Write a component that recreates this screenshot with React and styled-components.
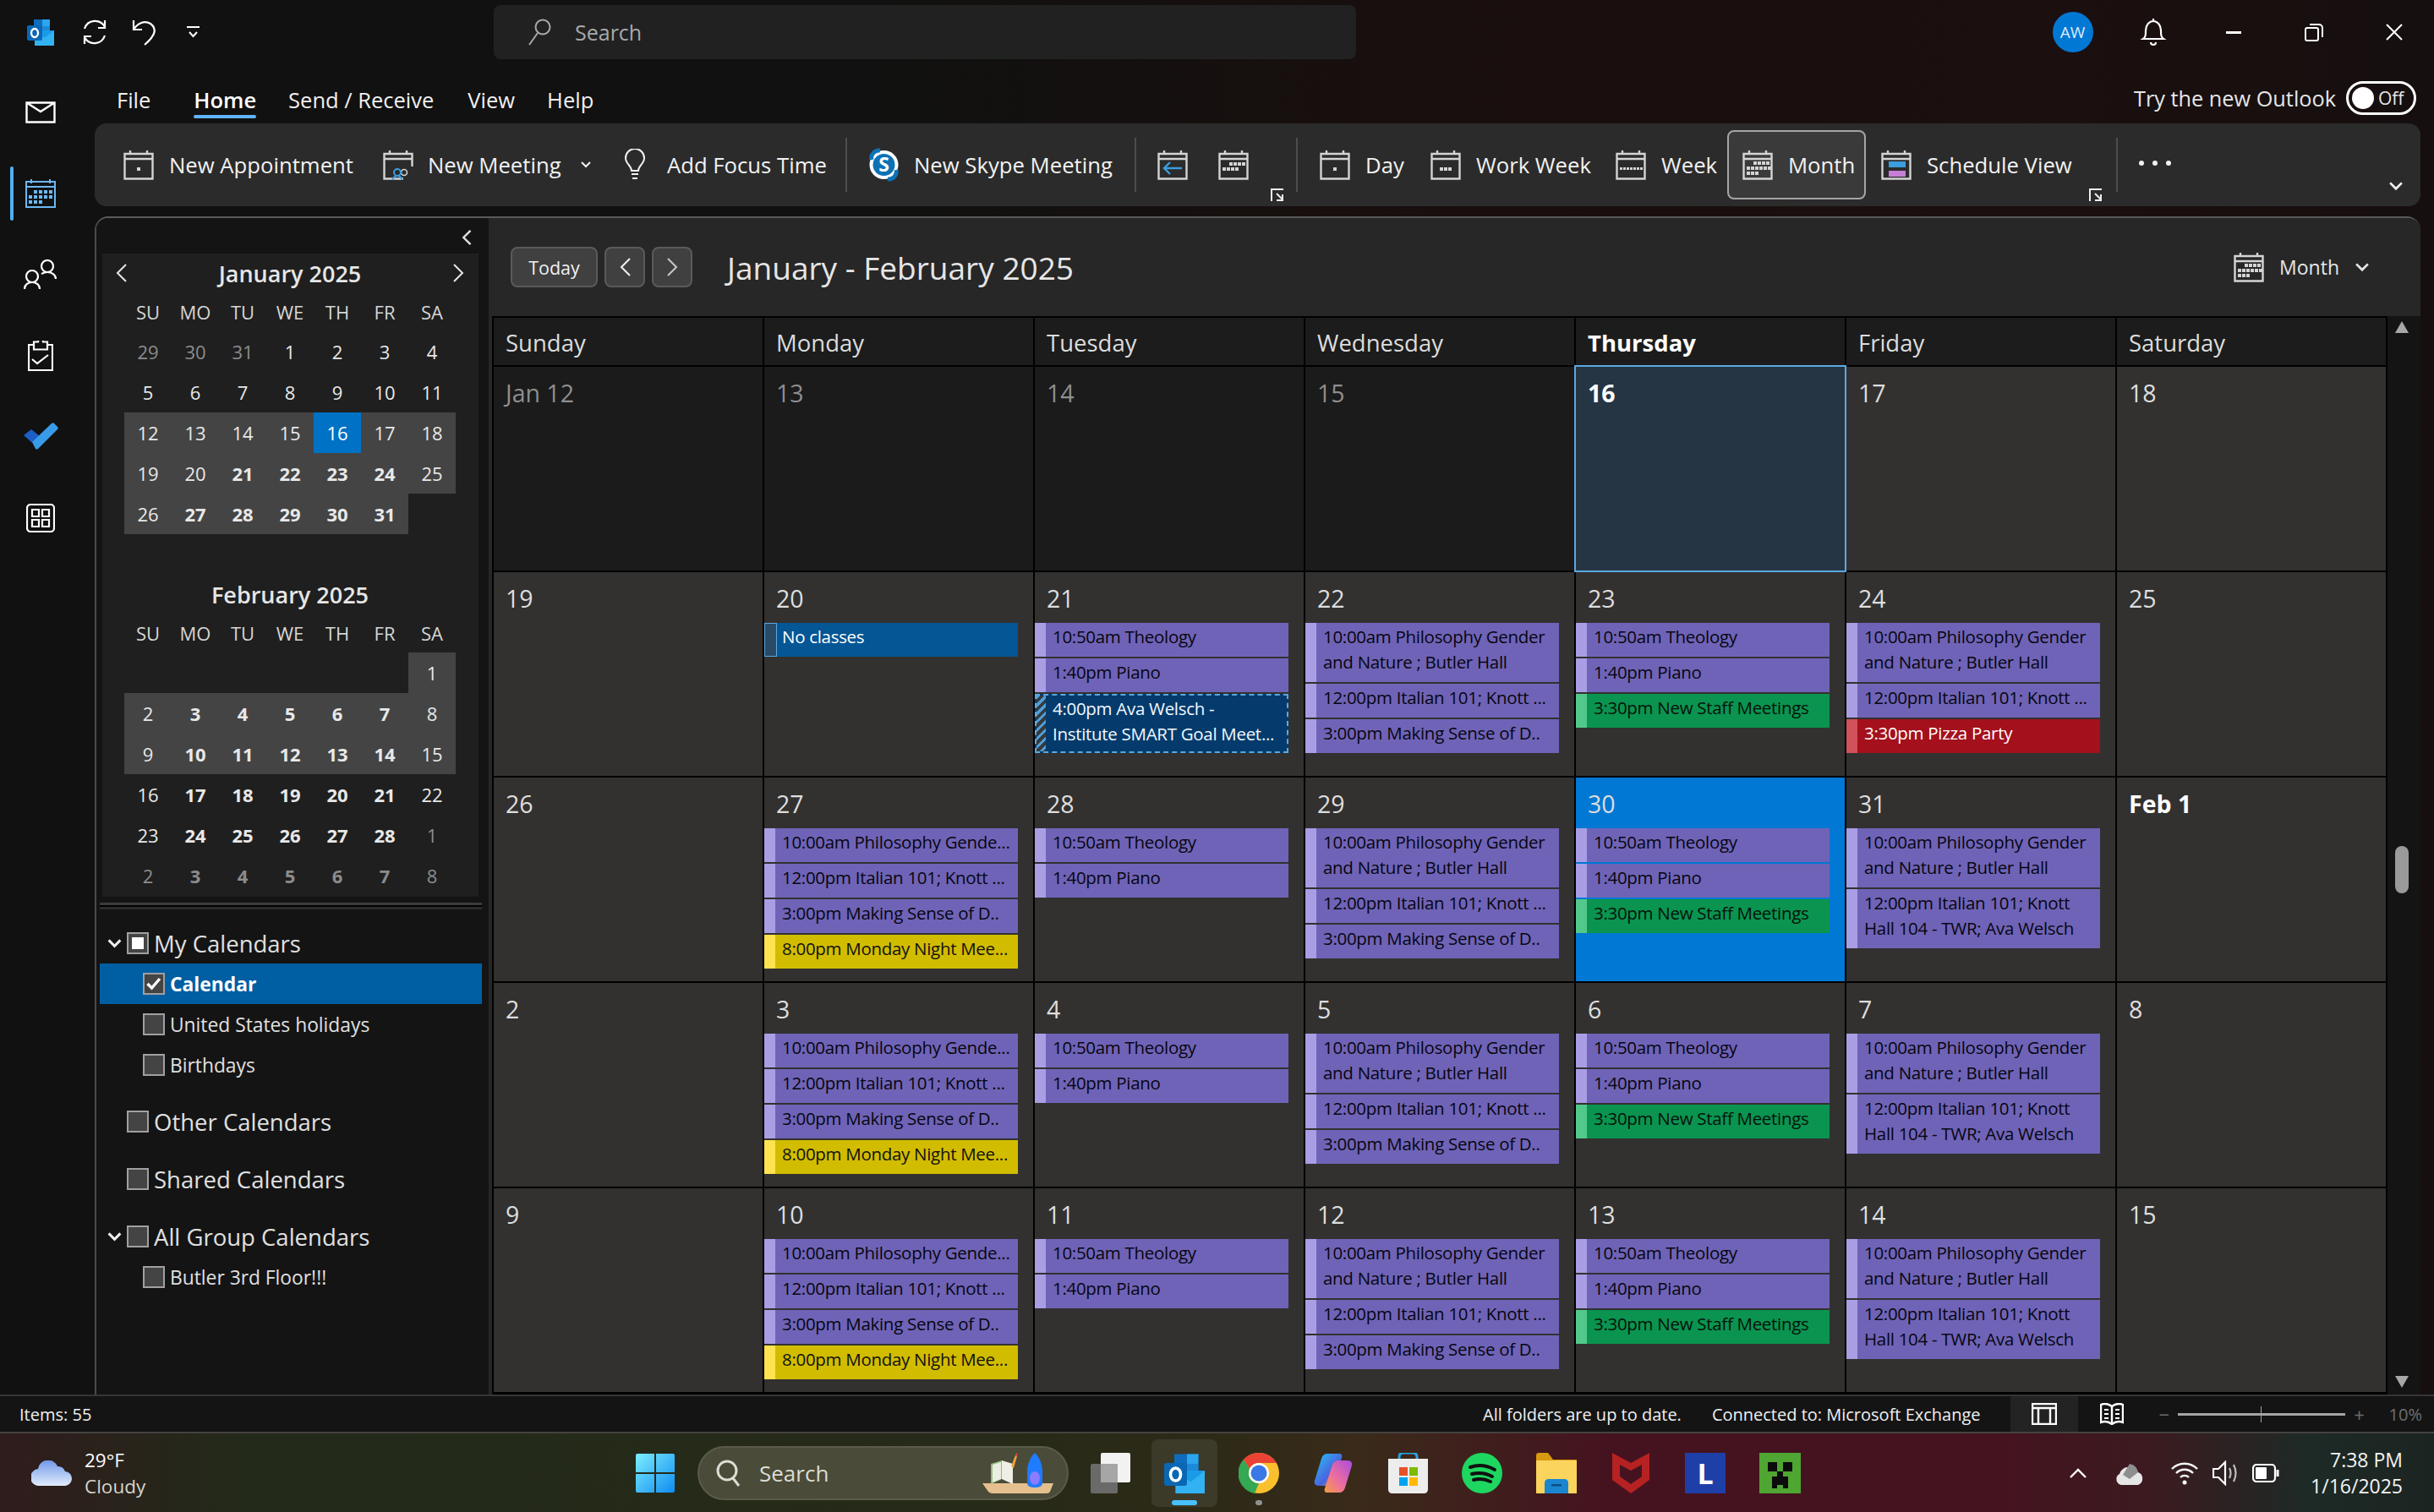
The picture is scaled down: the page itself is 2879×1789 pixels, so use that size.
import React from "react";
import styled, { createGlobalStyle } from "styled-components";

const FONT = `"Open Sans", "Noto Sans", sans-serif`;

const GlobalStyle = createGlobalStyle`
  html, body { margin: 0; padding: 0; background: #0f0f0f; }
  * { box-sizing: border-box; }
`;

const Shell = styled.div`
  width: 2879px;
  height: 1789px;
  overflow: hidden;
  display: flex;
  flex-direction: column;
  font-family: ${FONT};
  color: #e6e6e6;
  background: linear-gradient(90deg, #101110 0%, #101110 35%, #190f0e 60%, #1b0f0f 85%, #160f0f 100%);
`;

/* title bar */
const TitleBar = styled.div`
  height: 76px;
  flex: none;
  display: flex;
  align-items: center;
`;
const QuickAccess = styled.div`
  width: 584px;
  flex: none;
  display: flex;
  align-items: center;
  padding-left: 32px;
  color: #fff;
`;
const QuickIcon = styled.span`
  display: inline-flex;
  margin-left: ${(p) => p.$ml}px;
`;
const TopSearch = styled.div`
  width: 1020px;
  height: 64px;
  background: #212121;
  border-radius: 8px;
  display: flex;
  align-items: center;
  padding-left: 40px;
  gap: 28px;
  color: #a9a9a9;
  font-size: 25px;
`;
const WindowControls = styled.div`
  margin-left: auto;
  display: flex;
  align-items: center;
`;
const WindowSlot = styled.div`
  width: 95px;
  display: flex;
  justify-content: center;
  color: #fff;
`;
const Avatar = styled.div`
  width: 48px;
  height: 48px;
  border-radius: 50%;
  background: #0078d4;
  display: flex;
  align-items: center;
  justify-content: center;
  font-size: 19px;
  color: #dcecff;
`;

/* body */
const Body = styled.div`
  flex: 1;
  min-height: 0;
  display: flex;
`;
const Rail = styled.nav`
  width: 112px;
  flex: none;
  padding-top: 9px;
`;
const RailButton = styled.div`
  height: 96px;
  display: flex;
  align-items: center;
  justify-content: center;
  position: relative;
  padding-right: 16px;
  color: ${(p) => (p.$active ? "#6cb8f6" : "#fff")};
  &::before {
    content: "";
    display: ${(p) => (p.$active ? "block" : "none")};
    position: absolute;
    left: 12px;
    top: 16px;
    bottom: 16px;
    width: 4px;
    border-radius: 2px;
    background: #4fb0f5;
  }
`;
const Workspace = styled.div`
  flex: 1;
  min-width: 0;
  display: flex;
  flex-direction: column;
  padding-right: 16px;
`;

/* tabs */
const TabRow = styled.div`
  height: 70px;
  flex: none;
  display: flex;
  align-items: flex-start;
  padding: 24px 0 0 26px;
`;
const Tab = styled.div`
  height: 36px;
  line-height: 36px;
  font-size: 25.5px;
  font-weight: ${(p) => (p.$active ? 600 : 400)};
  color: ${(p) => (p.$active ? "#fff" : "#f0f0f0")};
  margin-right: ${(p) => p.$mr}px;
  position: relative;
  &::after {
    content: "";
    display: ${(p) => (p.$active ? "block" : "none")};
    position: absolute;
    left: 0;
    right: 0;
    bottom: -4px;
    height: 4px;
    border-radius: 2px;
    background: #60b4ff;
  }
`;
const NewOutlook = styled.div`
  margin-left: auto;
  display: flex;
  align-items: center;
  gap: 12px;
  font-size: 25.3px;
  margin-top: -4px;
  margin-right: 5px;
  height: 40px;
`;
const Toggle = styled.div`
  width: 83px;
  height: 40px;
  border: 3px solid #fff;
  border-radius: 20px;
  display: flex;
  align-items: center;
  padding-left: 4px;
  gap: 5px;
  font-size: 21px;
  &::before {
    content: "";
    width: 26px;
    height: 26px;
    border-radius: 50%;
    background: #fff;
  }
`;

/* ribbon */
const Ribbon = styled.div`
  height: 98px;
  flex: none;
  background: #2b2b2b;
  border-radius: 14px;
  display: flex;
  align-items: center;
  padding-left: 34px;
  font-size: 25.7px;
  color: #f2f2f2;
`;
const RibbonItem = styled.div`
  width: ${(p) => p.$w}px;
  flex: none;
  display: flex;
  align-items: center;
  gap: ${(p) => p.$gap ?? 18}px;
  white-space: nowrap;
`;
const RibbonActive = styled(RibbonItem)`
  height: 82px;
  padding-left: 16px;
  margin-right: 18px;
  background: #3a3a3a;
  border: 2px solid #a5a5a5;
  border-radius: 8px;
`;
const RibbonSep = styled.div`
  width: 2px;
  height: 64px;
  flex: none;
  background: #4d4d4d;
  margin: 0 ${(p) => p.$mr}px 0 0;
`;
const Launcher = styled.div`
  width: ${(p) => p.$w}px;
  flex: none;
  align-self: flex-end;
  height: 32px;
  color: #eee;
`;
const RibbonChevron = styled.div`
  margin-left: auto;
  margin-right: 20px;
  align-self: flex-end;
  margin-bottom: 18px;
  display: flex;
  color: #eee;
`;
const Dots = styled.div`
  margin-left: 25px;
  display: flex;
  gap: 10px;
  margin-top: -5px;
  & > i {
    width: 6px;
    height: 6px;
    border-radius: 50%;
    background: #f0f0f0;
  }
`;
const MeetCaret = styled.span`
  display: flex;
  margin-left: 6px;
`;

/* panel */
const Panel = styled.div`
  margin-top: 12px;
  flex: 1;
  min-height: 0;
  display: flex;
  border-radius: 16px 16px 0 0;
  border-top: 2px solid #5a5a5a;
  border-left: 2px solid #4a4a4a;
  overflow: hidden;
`;
const LeftPane = styled.aside`
  width: 464px;
  flex: none;
  background: #141414;
  padding-top: 14px;
`;
const Collapse = styled.div`
  height: 26px;
  display: flex;
  justify-content: flex-end;
  padding-right: 20px;
  color: #ddd;
`;
const MiniPanel = styled.div`
  width: 445px;
  margin: 2px 0 0 7px;
  background: #1f1f1f;
  padding: 0 0 0 26px;
  height: 761px;
`;
const MiniTitle = styled.div`
  height: 46px;
  width: 412px;
  margin-left: -10px;
  display: flex;
  align-items: center;
  justify-content: space-between;
  font-size: 27px;
  font-weight: 600;
  color: #e6e6e6;
`;
const MiniFebTitle = styled(MiniTitle)`
  justify-content: center;
  margin-left: 0;
  width: 392px;
`;
const MiniGrid = styled.div`
  display: grid;
  grid-template-columns: repeat(7, 56px);
  grid-auto-rows: 48px;
`;
const MiniHead = styled.div`
  display: grid;
  grid-template-columns: repeat(7, 56px);
  height: 46px;
  align-items: center;
  text-align: center;
  font-size: 22px;
  color: #d6d6d6;
`;
const MiniDay = styled.div`
  display: flex;
  align-items: center;
  justify-content: center;
  font-size: 22px;
  font-weight: ${(p) => (p.$bold ? 700 : 400)};
  color: ${(p) => (p.$dim ? "#8c8c8c" : p.$today ? "#fff" : "#e8e8e8")};
  background: ${(p) => (p.$today ? "#0072c6" : p.$shade ? "#444444" : "transparent")};
`;
const PaneRule = styled.div`
  height: 8px;
  margin: 7px 8px 0 4px;
  border-top: 3px solid #3c3c3c;
  border-bottom: 3px solid #2c2c2c;
  background: #000;
`;
const Tree = styled.div`
  padding: 16px 8px 0 4px;
`;
const TreeGroup = styled.div`
  height: 48px;
  margin-top: ${(p) => p.$mt || 0}px;
  display: flex;
  align-items: center;
  padding-left: 9px;
  gap: 6px;
  font-size: 27.5px;
  color: #e0e0e0;
`;
const TreeChevron = styled.span`
  width: 17px;
  display: flex;
  color: #eee;
`;
const TreeChild = styled.div`
  height: 48px;
  display: flex;
  align-items: center;
  padding-left: 51px;
  gap: 6px;
  font-size: 22.8px;
  font-weight: ${(p) => (p.$selected ? 700 : 400)};
  color: ${(p) => (p.$selected ? "#fff" : "#e0e0e0")};
  background: ${(p) => (p.$selected ? "#005ea2" : "transparent")};
`;
const CheckBox = styled.span`
  width: 26px;
  height: 26px;
  flex: none;
  background: #444;
  border: 2px solid #a0a0a0;
  display: flex;
  align-items: center;
  justify-content: center;
  color: #fff;
  &::before {
    content: "";
    display: ${(p) => (p.$mixed ? "block" : "none")};
    width: 14px;
    height: 14px;
    background: #fff;
  }
`;

/* calendar */
const RightPane = styled.main`
  flex: 1;
  min-width: 0;
  background: #272727;
  display: flex;
  flex-direction: column;
  padding-left: 4px;
`;
const CalBar = styled.div`
  height: 116px;
  flex: none;
  display: flex;
  align-items: center;
  padding: 0 60px 0 22px;
`;
const CalButton = styled.div`
  width: ${(p) => p.$w}px;
  height: 48px;
  margin-right: 8px;
  background: #404040;
  border: 2px solid #5a5a5a;
  border-radius: 8px;
  display: flex;
  align-items: center;
  justify-content: center;
  font-size: 21.5px;
  color: ${(p) => p.$tone || "#f0f0f0"};
`;
const CalTitle = styled.h1`
  margin: 0 0 0 33px;
  font-size: 37px;
  font-weight: 500;
  color: #e6e6e6;
  white-space: nowrap;
`;
const ViewPicker = styled.div`
  margin-left: auto;
  display: flex;
  align-items: center;
  gap: 18px;
  font-size: 23px;
  color: #e6e6e6;
`;
const GridWrap = styled.div`
  flex: 1;
  min-height: 0;
  display: flex;
`;
const MonthGrid = styled.div`
  width: 2242px;
  flex: none;
  background: #000;
  padding: 2px;
  display: grid;
  grid-template-columns: repeat(7, 318px);
  grid-template-rows: 56px repeat(5, 241px);
  gap: 2px;
`;
const DayHead = styled.div`
  background: #1c1c1c;
  display: flex;
  align-items: center;
  padding: 2px 0 0 14px;
  font-size: 27.5px;
  font-weight: ${(p) => (p.$today ? 700 : 400)};
  color: ${(p) => (p.$today ? "#fff" : "#dcdcdc")};
`;
const cellBg = { past: "#1b1b1b", today: "#253544", sel: "#0078d4", normal: "#323130" };
const DayCell = styled.div`
  background: ${(p) => cellBg[p.$kind || "normal"]};
  box-shadow: ${(p) => (p.$kind === "today" ? "0 0 0 2px #5aa8e0" : "none")};
  position: relative;
  min-width: 0;
`;
const DateLabel = styled.div`
  height: 60px;
  line-height: 62px;
  padding-left: 14px;
  font-size: 28.5px;
  font-weight: ${(p) => (p.$bold ? 700 : 400)};
  color: ${(p) => (p.$past ? "#8f8f8f" : p.$bold ? "#fff" : "#dedede")};
`;
const EventStack = styled.div`
  display: flex;
  flex-direction: column;
  gap: 2px;
  width: 300px;
`;
const tones = {
  purple: { bg: "#6f63b7", stripe: "#a99ee4", text: "#06060f" },
  green: { bg: "#0a9450", stripe: "#52c98a", text: "#04120a" },
  yellow: { bg: "#d2bc00", stripe: "#fde34f", text: "#111" },
  red: { bg: "#a4101c", stripe: "#d1515c", text: "#fff" },
  blue: { bg: "#055695", stripe: "#2a4a66", text: "#fff" },
};
const Event = styled.div`
  flex: none;
  padding: 1px 0 9px 21px;
  font-size: 20.5px;
  letter-spacing: -0.3px;
  line-height: 30px;
  white-space: pre;
  overflow: hidden;
  background: ${(p) => tones[p.$tone].bg};
  color: ${(p) => tones[p.$tone].text};
  position: relative;
  &::before {
    content: "";
    position: absolute;
    left: 0;
    top: 0;
    bottom: 0;
    width: 13px;
    background: ${(p) => tones[p.$tone].stripe};
    border: ${(p) => (p.$tone === "blue" ? "1px solid #5aa8e0" : "none")};
  }
`;
const TentativeEvent = styled.div`
  flex: none;
  height: 70px;
  padding: 0 0 0 19px;
  font-size: 20.5px;
  letter-spacing: -0.3px;
  line-height: 30px;
  white-space: pre;
  overflow: hidden;
  background: #043b6c;
  color: #f2f8ff;
  border: 2px dashed #5aa8e0;
  position: relative;
  &::before {
    content: "";
    position: absolute;
    left: 0;
    top: 0;
    bottom: 0;
    width: 11px;
    background: repeating-linear-gradient(135deg, #4d9fdc 0 3px, #3a3a3a 3px 7px);
  }
`;
const Scrollbar = styled.div`
  flex: 1;
  background: #141414;
  position: relative;
`;
const ScrollArrow = styled.div`
  position: absolute;
  left: 9px;
  ${(p) => (p.$down ? "bottom: 8px;" : "top: 6px;")}
  width: 0;
  height: 0;
  border-left: 8px solid transparent;
  border-right: 8px solid transparent;
  ${(p) => (p.$down ? "border-top: 14px solid #a8a8a8;" : "border-bottom: 14px solid #a8a8a8;")}
`;
const ScrollThumb = styled.div`
  position: absolute;
  left: 9px;
  top: 627px;
  width: 16px;
  height: 56px;
  border-radius: 8px;
  background: #9a9a9a;
`;

/* status bar */
const StatusBar = styled.div`
  height: 44px;
  flex: none;
  background: #141414;
  border-top: 2px solid #353535;
  display: flex;
  align-items: center;
  padding-left: 23px;
  font-size: 20px;
  color: #f0f0f0;
`;
const StatusRight = styled.div`
  margin-left: auto;
  display: flex;
  align-items: center;
  height: 100%;
  padding-right: 14px;
`;
const StatusText = styled.span`
  margin-right: ${(p) => p.$mr}px;
`;
const ViewTab = styled.div`
  width: 80px;
  height: 100%;
  display: flex;
  align-items: center;
  justify-content: center;
  background: ${(p) => (p.$on ? "#232323" : "transparent")};
  color: #fff;
  margin-right: ${(p) => p.$mr || 0}px;
`;
const Slider = styled.div`
  width: 246px;
  display: flex;
  align-items: center;
  gap: 10px;
  color: #6d6d6d;
  font-size: 22px;
`;
const SliderTrack = styled.div`
  width: 198px;
  height: 3px;
  background: #a5a5a5;
  position: relative;
  flex: none;
  &::after {
    content: "";
    position: absolute;
    left: 98px;
    top: -8px;
    width: 1px;
    height: 19px;
    background: #a5a5a5;
  }
`;
const ZoomPct = styled.span`
  color: #6f6f6f;
  margin-left: 26px;
`;

/* taskbar */
const Taskbar = styled.footer`
  height: 95px;
  flex: none;
  display: flex;
  align-items: center;
  border-top: 2px solid #45423f;
  background: linear-gradient(90deg, #2f1c1c 0%, #232a1a 10%, #262a18 40%, #2d2a17 50%, #3a2a1a 56%, #45131f 66%, #45131f 82%, #3c1a1f 88%, #1d2a26 95%, #1c2421 100%);
`;
const Weather = styled.div`
  width: 752px;
  flex: none;
  display: flex;
  align-items: center;
  gap: 14px;
  padding-left: 37px;
  font-size: 22.5px;
  line-height: 31px;
  color: #fff;
`;
const WeatherSub = styled.div`
  color: #d4d4d0;
`;
const SearchPill = styled.div`
  width: 439px;
  height: 64px;
  margin: 0 26px 0 27px;
  border-radius: 32px;
  background: #4a4b38;
  border: 2px solid #5a5b48;
  display: flex;
  align-items: center;
  padding: 0 10px 0 20px;
  gap: 21px;
  font-size: 26px;
  color: #dcdcd4;
`;
const PillArt = styled.span`
  margin-left: auto;
  display: flex;
`;
const TaskTiles = styled.div`
  margin-left: 25px;
  display: flex;
  gap: 10px;
`;
const TaskTile = styled.div`
  width: 78px;
  height: 80px;
  display: flex;
  align-items: center;
  justify-content: center;
  position: relative;
  border-radius: 8px;
  background: ${(p) => (p.$active ? "rgba(255, 255, 255, 0.08)" : "transparent")};
  &::after {
    content: "";
    display: ${(p) => (p.$mark ? "block" : "none")};
    position: absolute;
    bottom: 2px;
    left: 50%;
    transform: translateX(-50%);
    width: ${(p) => (p.$mark === "blue" ? 30 : 8)}px;
    height: 6px;
    border-radius: 3px;
    background: ${(p) => (p.$mark === "blue" ? "#47c0ff" : "#8f8f8f")};
  }
`;
const Tray = styled.div`
  margin-left: auto;
  display: flex;
  align-items: center;
  color: #fff;
  padding-right: 37px;
`;
const TrayIcon = styled.span`
  display: flex;
  margin-left: ${(p) => p.$ml}px;
`;
const Clock = styled.div`
  margin-left: 37px;
  text-align: right;
  font-size: 23px;
  line-height: 31px;
  color: #f4f4f4;
`;

/* icons */
const Svg = ({ w, h, vb, children, sw = 2, fill = "none", ...rest }) => (
  <svg width={w} height={h} viewBox={vb || `0 0 ${w} ${h}`} fill={fill} stroke={fill === "none" ? "currentColor" : "none"} strokeWidth={sw} {...rest}>
    {children}
  </svg>
);

const Cells = ({ rows, color = "#d8d8d8", s = 4 }) =>
  rows.flatMap(([y, xs]) => xs.map((x) => <rect key={`${x}-${y}`} x={x} y={y} width={s} height={s} fill={color} stroke="none" />));

const CalIcon = ({ kind, color = "#d4d4d4" }) => (
  <svg width="36" height="36" viewBox="0 0 36 36" fill="none" stroke={color} strokeWidth="2.4" style={{ flex: "none" }}>
    <path d="M1.5 5h33v29.5h-33zM1.5 11h33M8 1v5M28 1v5" />
    {kind === "dot" && <Cells rows={[[21, [16]]]} color={color} />}
    {kind === "work" && <Cells rows={[[21, [11, 16, 21]]]} color={color} />}
    {kind === "week" && <Cells rows={[[21, [5, 9, 13, 17, 21, 25, 29]]]} color={color} s={3} />}
    {kind === "next" && <Cells rows={[[15, [13, 18, 23, 28]], [21, [5, 10, 15, 20]]]} color={color} />}
    {kind === "month" && <Cells rows={[[14, [13, 18, 23, 28]], [20, [5, 10, 15, 20, 25, 30]], [26, [5, 10, 15]]]} color={color} />}
    {kind === "today" && (
      <path d="M29 22H8M15 15l-7 7 7 7" stroke="#3a9de0" strokeWidth="2.4" />
    )}
    {kind === "schedule" && (
      <>
        <rect x="9" y="14" width="20" height="7" fill="#3a9de0" stroke="none" />
        <rect x="9" y="25" width="20" height="7" fill="#c77fd6" stroke="none" />
      </>
    )}
    {kind === "meet" && (
      <>
        <rect x="24" y="20" width="14" height="16" fill="#2b2b2b" stroke="none" />
        <circle cx="25" cy="27" r="3.5" stroke="#d4d4d4" strokeWidth="1.6" />
        <circle cx="17" cy="27" r="4" stroke="#3a9de0" strokeWidth="2" />
        <path d="M11 37c1-4 3-6 6-6s5 2 6 6" stroke="#3a9de0" strokeWidth="2" />
      </>
    )}
  </svg>
);

const LauncherIcon = () => (
  <Svg w={16} h={16}>
    <path d="M15 1H1v14M7 6l7 7M14 7v7H7" />
  </Svg>
);
const SmallChevron = ({ w = 12, h = 8, sw = 2 }) => (
  <Svg w={w} h={h} vb="0 0 12 8" sw={sw}>
    <path d="M1 1l5 5 5-5" />
  </Svg>
);
const Arrow = ({ left, w = 13, h = 22, sw = 2 }) => (
  <Svg w={w} h={h} vb="0 0 13 22" sw={sw}>
    <path d={left ? "M12 1L2 11l10 10" : "M1 1l10 10L1 21"} />
  </Svg>
);

const OutlookLogo = ({ size = 32 }) => (
  <svg width={size} height={size} viewBox="0 0 32 32">
    <path d="M8 1h19v15H8z" fill="#0f6cbd" />
    <path d="M18 1h9v8h-9z" fill="#2aa5ee" />
    <path d="M18 9h9v7h-9z" fill="#1c8ad9" />
    <path d="M9 14h23v18H9z" fill="#1a9be8" />
    <path d="M9 14l12 9 11-9v18H9z" fill="#33b2f2" />
    <rect x="0" y="8" width="18" height="18" rx="2" fill="#0a67b4" />
    <ellipse cx="9" cy="17" rx="4" ry="5" fill="none" stroke="#fff" strokeWidth="2.4" />
  </svg>
);
const SkypeLogo = () => (
  <svg width="37" height="40" viewBox="0 0 37 40" style={{ flex: "none" }}>
    <circle cx="18.5" cy="20" r="17" fill="#fff" />
    <path d="M4 14a9 9 0 0 1 10-11M33 26a9 9 0 0 1-10 11" stroke="#0b72b5" strokeWidth="5" fill="none" />
    <circle cx="18.5" cy="20" r="13" fill="#0b72b5" />
    <text x="18.5" y="28" textAnchor="middle" fontFamily={FONT} fontWeight="700" fontSize="23" fill="#fff">S</text>
  </svg>
);
const Bulb = () => (
  <Svg w={26} h={38} sw={2}>
    <path d="M9 26c0-6-7-8-7-15a11 11 0 0 1 22 0c0 7-7 9-7 15z" />
    <path d="M9 30h8M10 35h6" />
  </Svg>
);
const MailIcon = () => (
  <Svg w={36} h={26} sw={2.4}>
    <path d="M1.5 1.5h33v23h-33zM1.5 1.5L18 12 34.5 1.5" />
  </Svg>
);
const RailCalendar = () => (
  <svg width="36" height="34" viewBox="0 0 36 34" fill="none" stroke="#6cb8f6" strokeWidth="2">
    <path d="M1 3h34v30H1zM1 9h34M7 0v5M29 0v5" />
    <Cells rows={[[13, [10, 16, 22, 28]], [19, [4, 10, 16, 22, 28]], [25, [4, 10, 16]]]} color="#6cb8f6" />
  </svg>
);
const PeopleIcon = () => (
  <Svg w={40} h={36} sw={2.2}>
    <circle cx="10" cy="20" r="7" />
    <path d="M1 35c0-5 4-8 9-8s9 3 9 8" />
    <circle cx="28" cy="8" r="7" />
    <path d="M21 17c2-1 4-2 7-2 5 0 10 3 10 8" />
  </Svg>
);
const TasksIcon = () => (
  <Svg w={30} h={36} sw={2.2}>
    <path d="M7 5H1v30h28V5h-6M7 1.5v9h16v-9h-5a3 3 0 0 0-6 0z" />
    <path d="M5 22l6 5 13-10" />
  </Svg>
);
const TodoLogo = () => (
  <svg width="42" height="34" viewBox="0 0 42 34">
    <path d="M1 15l9-7 10 8-9 8z" fill="#1c5fc4" />
    <path d="M11 23l23-22c1-1 2-1 3 0l4 4c1 1 1 2 0 3L18 31c-1 1-2 1-3 0z" fill="#389be8" />
  </svg>
);
const AppsIcon = () => (
  <Svg w={34} h={34} sw={2.2}>
    <rect x="1" y="1" width="32" height="32" rx="4" />
    <path d="M7 7h8v8H7zM19 7h8v8h-8zM7 19h8v8H7zM19 19h8v8h-8z" />
  </Svg>
);
const Magnifier = () => (
  <Svg w={28} h={32} sw={2}>
    <circle cx="18" cy="10" r="8.5" />
    <path d="M12 17L2 31" />
  </Svg>
);
const Sync = () => (
  <Svg w={32} h={32} sw={2.2}>
    <path d="M4 12A13 13 0 0 1 28 10M28 20A13 13 0 0 1 4 22" />
    <path d="M28 2v9h-8M4 30v-9h8" />
  </Svg>
);
const Undo = () => (
  <Svg w={30} h={32} sw={2.2}>
    <path d="M2 2v11h10M2 13c5-8 13-11 20-7 8 6 6 14-7 25" />
  </Svg>
);
const QuickDrop = () => (
  <Svg w={15} h={14} sw={2}>
    <path d="M0 1h15M3 7l4.5 5 4.5-5" />
  </Svg>
);
const Bell = () => (
  <Svg w={32} h={34} sw={2.2}>
    <path d="M4 25c3-2 3-5 3-10 0-6 4-11 9-11s9 5 9 11c0 5 0 8 3 10zM13 29a3 3 0 0 0 6 0M16 1v3" />
  </Svg>
);
const Restore = () => (
  <Svg w={22} h={21} sw={2}>
    <rect x="1" y="5" width="15" height="15" rx="2" />
    <path d="M6 1h11a4 4 0 0 1 4 4v11" />
  </Svg>
);
const Close = () => (
  <Svg w={20} h={20} sw={2}>
    <path d="M1 1l18 18M19 1L1 19" />
  </Svg>
);
const CheckMark = () => (
  <Svg w={18} h={16} sw={3.4}>
    <path d="M1.5 8l5 5L16 2" />
  </Svg>
);
const ViewNormal = () => (
  <Svg w={30} h={26} sw={2.4}>
    <path d="M1 1h28v24H1zM1 6h28M8 6v19M22 6v19" />
  </Svg>
);
const ViewReading = () => (
  <Svg w={28} h={26} sw={2.4}>
    <path d="M1 2c5-2 9-1 13 2 4-3 8-4 13-2v21c-5-2-9-1-13 2-4-3-8-4-13-2zM14 4v21" />
    <path d="M5 8h5M5 13h5M5 18h5M18 8h5M18 13h5M18 18h5" strokeWidth="2" />
  </Svg>
);
const CloudWeather = () => (
  <svg width="49" height="30" viewBox="0 0 49 30">
    <defs>
      <linearGradient id="wx" x1="0" y1="0" x2="0" y2="1">
        <stop offset="0" stopColor="#6f98ea" />
        <stop offset="1" stopColor="#e2ecfb" />
      </linearGradient>
    </defs>
    <path d="M10 30a10 10 0 0 1-2-20 12 12 0 0 1 23-3 9 9 0 0 1 9 6 8.5 8.5 0 0 1-1 17z" fill="url(#wx)" />
  </svg>
);
const WindowsLogo = () => (
  <svg width="46" height="46" viewBox="0 0 46 46" style={{ flex: "none" }}>
    <defs>
      <linearGradient id="win" x1="0" y1="0" x2="1" y2="1">
        <stop offset="0" stopColor="#7ceeff" />
        <stop offset="1" stopColor="#0f8cf0" />
      </linearGradient>
    </defs>
    <path d="M0 2a2 2 0 0 1 2-2h20v22H0zM24 0h20a2 2 0 0 1 2 2v20H24zM0 24h22v22H2a2 2 0 0 1-2-2zM24 24h22v20a2 2 0 0 1-2 2H24z" fill="url(#win)" />
  </svg>
);
const TaskSearch = () => (
  <Svg w={30} h={32} sw={3}>
    <circle cx="13" cy="13" r="11" />
    <path d="M20 22l7 9" />
  </Svg>
);
const PillPicture = () => (
  <svg width="92" height="48" viewBox="0 0 92 48">
    <path d="M2 36h84l-4 10q-1 2-4 2H14q-3 0-5-2z" fill="#e4c08e" />
    <path d="M12 13l13-4v22l-13 6z" fill="#8fbf7a" />
    <path d="M25 9l13 4v24l-13-6z" fill="#f0efe6" />
    <path d="M14 14l10-3v20l-10 4z" fill="#e9eee0" />
    <path d="M36 16l5-13 2 1-4 14z" fill="#f2a33a" />
    <path d="M41 3l1-3 2 2-1 2z" fill="#d8433a" />
    <path d="M64 0c5 4 9 14 9 22v14q0 5-9 5t-9-5V22c0-8 4-18 9-22z" fill="#1f7bff" />
    <ellipse cx="64" cy="30" rx="6" ry="8" fill="#8a7dff" />
  </svg>
);
const TaskView = () => (
  <svg width="47" height="48" viewBox="0 0 47 48" style={{ flex: "none" }}>
    <rect x="0" y="13" width="32" height="35" rx="2" fill="#6a6a6a" />
    <rect x="12" y="0" width="35" height="35" rx="2" fill="#f2f2f2" />
    <rect x="12" y="13" width="20" height="22" fill="#a6a6a6" />
  </svg>
);
const ChromeLogo = () => (
  <svg width="48" height="48" viewBox="0 0 48 48">
    <circle cx="24" cy="24" r="24" fill="#fbc02d" />
    <path d="M24 0A24 24 0 0 1 45 12H24a12 12 0 0 0-11 7L6 8A24 24 0 0 1 24 0z" fill="#ea4335" />
    <path d="M6 8l7 11a12 12 0 0 0 11 17l-5 12A24 24 0 0 1 6 8z" fill="#34a853" />
    <circle cx="24" cy="24" r="12" fill="#fff" />
    <circle cx="24" cy="24" r="9.5" fill="#3b78e7" />
  </svg>
);
const CopilotLogo = () => (
  <svg width="46" height="46" viewBox="0 0 46 46">
    <defs>
      <linearGradient id="cp1" x1="0" y1="0" x2="1" y2="1">
        <stop offset="0" stopColor="#26c6f0" />
        <stop offset="0.6" stopColor="#4a62e0" />
        <stop offset="1" stopColor="#f0c020" />
      </linearGradient>
      <linearGradient id="cp2" x1="1" y1="0" x2="0" y2="1">
        <stop offset="0" stopColor="#a84be0" />
        <stop offset="0.6" stopColor="#f0709a" />
        <stop offset="1" stopColor="#f2a040" />
      </linearGradient>
    </defs>
    <path d="M16 0h14c3 0 4 2 3 5l-9 28c-1 3-4 5-7 5H6c-4 0-6-3-5-6L9 6c1-4 4-6 7-6z" fill="url(#cp1)" />
    <path d="M30 46H16c-3 0-4-2-3-5l9-28c1-3 4-5 7-5h11c4 0 6 3 5 6l-8 26c-1 4-4 6-7 6z" fill="url(#cp2)" />
  </svg>
);
const StoreLogo = () => (
  <svg width="47" height="48" viewBox="0 0 47 48">
    <path d="M13 10V5q0-5 5-5h11q5 0 5 5v5" fill="none" stroke="#26a5e6" strokeWidth="3" />
    <path d="M0 7h47v36q0 5-5 5H5q-5 0-5-5z" fill="#ededed" />
    <rect x="13" y="17" width="10" height="10" fill="#e6512a" />
    <rect x="25" y="17" width="10" height="10" fill="#7fba00" />
    <rect x="13" y="29" width="10" height="10" fill="#00a4ef" />
    <rect x="25" y="29" width="10" height="10" fill="#ffb900" />
  </svg>
);
const SpotifyLogo = () => (
  <svg width="48" height="48" viewBox="0 0 48 48">
    <circle cx="24" cy="24" r="24" fill="#1ed760" />
    <path d="M10 17c9-3 20-2 29 3M12 25c8-2 17-1 24 3M14 32c7-2 14-1 20 2" fill="none" stroke="#111" strokeWidth="4" strokeLinecap="round" />
  </svg>
);
const FolderLogo = () => (
  <svg width="48" height="48" viewBox="0 0 48 48">
    <path d="M0 3q0-3 3-3h11l6 8h28v40H0z" fill="#d99a12" />
    <rect x="0" y="9" width="48" height="39" rx="1" fill="#fbd45e" />
    <path d="M10 48V36q0-5 5-5h18q5 0 5 5v12z" fill="#1a86d0" />
    <rect x="18" y="37" width="12" height="2.5" fill="#0b4e86" />
  </svg>
);
const ShieldLogo = () => (
  <svg width="44" height="48" viewBox="0 0 44 48">
    <path d="M0 0l22 12L44 0v32L22 48 0 32zM9 14v14l13 9 13-9V14l-13 7z" fill="#b62222" fillRule="evenodd" />
  </svg>
);
const LBadge = () => (
  <svg width="48" height="48" viewBox="0 0 48 48">
    <rect width="48" height="48" fill="#1e3fa8" />
    <text x="24" y="37" textAnchor="middle" fontFamily={FONT} fontWeight="700" fontSize="34" fill="#fff">L</text>
  </svg>
);
const CreeperLogo = () => (
  <svg width="49" height="48" viewBox="0 0 49 48">
    <rect width="49" height="48" fill="#4fa632" />
    <path d="M10 11h11v11H10zM28 11h11v11H28zM21 22h7v6h6v14h-6v-4h-7v4h-6V28h6z" fill="#0c0c0c" />
  </svg>
);
const TrayCloud = () => (
  <svg width="34" height="28" viewBox="0 0 34 28">
    <path d="M7 28a7 7 0 0 1-2-13 12 12 0 0 1 22-2 8 8 0 0 1 0 15z" fill="#e6e6e6" />
    <path d="M17 3a12 12 0 0 1 10 10l-10 8-8-5z" fill="#8f8f8f" />
  </svg>
);
const WifiIcon = () => (
  <Svg w={32} h={30} sw={2.4}>
    <path d="M1 10a21 21 0 0 1 30 0M6 15a14 14 0 0 1 20 0M11 20a7 7 0 0 1 10 0" />
    <circle cx="16" cy="26" r="2.5" fill="currentColor" stroke="none" />
  </Svg>
);
const SpeakerIcon = () => (
  <Svg w={32} h={30} sw={2.2}>
    <path d="M1 10h6l8-8v26l-8-8H1z" />
    <path d="M20 9q3 6 0 12M25 5q5 10 0 20" opacity="0.7" />
  </Svg>
);
const BatteryIcon = () => (
  <svg width="32" height="22" viewBox="0 0 32 22" fill="none" stroke="#fff" strokeWidth="2.2">
    <rect x="1" y="1" width="26" height="20" rx="4" />
    <rect x="4" y="4" width="13" height="14" rx="1" fill="#fff" stroke="none" />
    <path d="M30 7v8" strokeWidth="3" />
  </svg>
);
const ChevronUp = () => (
  <Svg w={20} h={12} sw={2.4}>
    <path d="M1 11L10 2l9 9" />
  </Svg>
);

/* data */
const PHIL_SHORT = "10:00am Philosophy Gende...";
const PHIL = "10:00am Philosophy Gender\nand Nature ; Butler Hall";
const ITAL_SHORT = "12:00pm Italian 101; Knott ...";
const ITAL = "12:00pm Italian 101; Knott\nHall 104 - TWR; Ava Welsch";
const MAKING = "3:00pm Making Sense of D..";
const NIGHT = "8:00pm Monday Night Mee...";
const THEO = "10:50am Theology";
const PIANO = "1:40pm Piano";
const STAFF = "3:30pm New Staff Meetings";

const ev = (text, tone = "purple") => ({ text, tone });
const mon = [ev(PHIL_SHORT), ev(ITAL_SHORT), ev(MAKING), ev(NIGHT, "yellow")];
const tue = [ev(THEO), ev(PIANO)];
const wed = [ev(PHIL), ev(ITAL_SHORT), ev(MAKING)];
const thu = [ev(THEO), ev(PIANO), ev(STAFF, "green")];
const fri = [ev(PHIL), ev(ITAL)];

const WEEKS = [
  [
    { d: "Jan 12", kind: "past", past: true },
    { d: "13", kind: "past", past: true },
    { d: "14", kind: "past", past: true },
    { d: "15", kind: "past", past: true },
    { d: "16", kind: "today", bold: true },
    { d: "17" },
    { d: "18" },
  ],
  [
    { d: "19" },
    { d: "20", ev: [ev("No classes", "blue")] },
    { d: "21", ev: [...tue, { tentative: "4:00pm Ava Welsch -\nInstitute SMART Goal Meet..." }] },
    { d: "22", ev: wed },
    { d: "23", ev: thu },
    { d: "24", ev: [ev(PHIL), ev(ITAL_SHORT), ev("3:30pm Pizza Party", "red")] },
    { d: "25" },
  ],
  [
    { d: "26" },
    { d: "27", ev: mon },
    { d: "28", ev: tue },
    { d: "29", ev: wed },
    { d: "30", ev: thu, kind: "sel" },
    { d: "31", ev: fri },
    { d: "Feb 1", bold: true },
  ],
  [
    { d: "2" },
    { d: "3", ev: mon },
    { d: "4", ev: tue },
    { d: "5", ev: wed },
    { d: "6", ev: thu },
    { d: "7", ev: fri },
    { d: "8" },
  ],
  [
    { d: "9" },
    { d: "10", ev: mon },
    { d: "11", ev: tue },
    { d: "12", ev: wed },
    { d: "13", ev: thu },
    { d: "14", ev: fri },
    { d: "15" },
  ],
];
const DAYS = ["Sunday", "Monday", "Tuesday", "Wednesday", "Thursday", "Friday", "Saturday"];
const MINI_HEAD = ["SU", "MO", "TU", "WE", "TH", "FR", "SA"];
// flags after the number: s shaded, b bold, d dimmed, t today
const JAN = "29d 30d 31d 1 2 3 4 5 6 7 8 9 10 11 12s 13s 14s 15s 16t 17s 18s 19s 20s 21sb 22sb 23sb 24sb 25s 26s 27sb 28sb 29sb 30sb 31sb _ _ _ _ _ _ _ _".split(" ");
const FEB = "_ _ _ _ _ _ 1s 2s 3sb 4sb 5sb 6sb 7sb 8s 9s 10sb 11sb 12sb 13sb 14sb 15s 16 17b 18b 19b 20b 21b 22 23 24b 25b 26b 27b 28b 1d 2d 3bd 4bd 5bd 6bd 7bd 8d".split(" ");

const MiniMonth = ({ days }) => (
  <>
    <MiniHead>
      {MINI_HEAD.map((h) => (
        <span key={h}>{h}</span>
      ))}
    </MiniHead>
    <MiniGrid>
      {days.map((raw, i) => {
        const num = raw.replace(/[a-z_]/g, "");
        return (
          <MiniDay key={i} $shade={raw.includes("s")} $bold={raw.includes("b")} $dim={raw.includes("d")} $today={raw.includes("t")}>
            {num}
          </MiniDay>
        );
      })}
    </MiniGrid>
  </>
);

const RibbonBar = () => (
  <Ribbon>
    <RibbonItem $w={307}><CalIcon kind="dot" />New Appointment</RibbonItem>
    <RibbonItem $w={285} $gap={17}>
      <CalIcon kind="meet" />New Meeting
      <MeetCaret><SmallChevron /></MeetCaret>
    </RibbonItem>
    <RibbonItem $w={262} $gap={25}><Bulb />Add Focus Time</RibbonItem>
    <RibbonSep $mr={25} />
    <RibbonItem $w={315} $gap={17}><SkypeLogo />New Skype Meeting</RibbonItem>
    <RibbonSep $mr={25} />
    <RibbonItem $w={72}><CalIcon kind="today" /></RibbonItem>
    <RibbonItem $w={62}><CalIcon kind="next" /></RibbonItem>
    <Launcher $w={30}><LauncherIcon /></Launcher>
    <RibbonSep $mr={26} />
    <RibbonItem $w={131}><CalIcon kind="dot" />Day</RibbonItem>
    <RibbonItem $w={219}><CalIcon kind="work" />Work Week</RibbonItem>
    <RibbonItem $w={132}><CalIcon kind="week" />Week</RibbonItem>
    <RibbonActive $w={164}><CalIcon kind="month" />Month</RibbonActive>
    <RibbonItem $w={246}><CalIcon kind="schedule" />Schedule View</RibbonItem>
    <Launcher $w={32}><LauncherIcon /></Launcher>
    <RibbonSep $mr={0} />
    <Dots><i /><i /><i /></Dots>
    <RibbonChevron><SmallChevron w={18} h={11} /></RibbonChevron>
  </Ribbon>
);

const LeftSide = () => (
  <LeftPane>
    <Collapse><Arrow left w={12} h={18} sw={3} /></Collapse>
    <MiniPanel>
      <MiniTitle>
        <Arrow left />
        January 2025
        <Arrow />
      </MiniTitle>
      <MiniMonth days={JAN} />
      <MiniFebTitle>February 2025</MiniFebTitle>
      <MiniMonth days={FEB} />
    </MiniPanel>
    <PaneRule />
    <Tree>
      <TreeGroup>
        <TreeChevron><SmallChevron w={17} h={11} sw={2.2} /></TreeChevron>
        <CheckBox $mixed />My Calendars
      </TreeGroup>
      <TreeChild $selected><CheckBox><CheckMark /></CheckBox>Calendar</TreeChild>
      <TreeChild><CheckBox />United States holidays</TreeChild>
      <TreeChild><CheckBox />Birthdays</TreeChild>
      <TreeGroup $mt={19}><TreeChevron /><CheckBox />Other Calendars</TreeGroup>
      <TreeGroup $mt={20}><TreeChevron /><CheckBox />Shared Calendars</TreeGroup>
      <TreeGroup $mt={20}>
        <TreeChevron><SmallChevron w={17} h={11} sw={2.2} /></TreeChevron>
        <CheckBox />All Group Calendars
      </TreeGroup>
      <TreeChild><CheckBox />Butler 3rd Floor!!!</TreeChild>
    </Tree>
  </LeftPane>
);

const CalendarSide = () => (
  <RightPane>
    <CalBar>
      <CalButton $w={103}>Today</CalButton>
      <CalButton $w={48}><Arrow left w={13} h={22} /></CalButton>
      <CalButton $w={48} $tone="#c8c8c8"><Arrow w={13} h={22} /></CalButton>
      <CalTitle>January - February 2025</CalTitle>
      <ViewPicker>
        <CalIcon kind="month" />
        Month
        <SmallChevron w={18} h={11} />
      </ViewPicker>
    </CalBar>
    <GridWrap>
      <MonthGrid>
        {DAYS.map((d) => (
          <DayHead key={d} $today={d === "Thursday"}>{d}</DayHead>
        ))}
        {WEEKS.flat().map((c, i) => (
          <DayCell key={i} $kind={c.kind}>
            <DateLabel $bold={c.bold} $past={c.past}>{c.d}</DateLabel>
            <EventStack>
              {(c.ev || []).map((e, j) =>
                e.tentative ? (
                  <TentativeEvent key={j}>{e.tentative}</TentativeEvent>
                ) : (
                  <Event key={j} $tone={e.tone}>{e.text}</Event>
                )
              )}
            </EventStack>
          </DayCell>
        ))}
      </MonthGrid>
      <Scrollbar>
        <ScrollArrow />
        <ScrollThumb />
        <ScrollArrow $down />
      </Scrollbar>
    </GridWrap>
  </RightPane>
);

export default function App() {
  return (
    <Shell>
      <GlobalStyle />
      <TitleBar>
        <QuickAccess>
          <OutlookLogo />
          <QuickIcon $ml={32}><Sync /></QuickIcon>
          <QuickIcon $ml={28}><Undo /></QuickIcon>
          <QuickIcon $ml={35}><QuickDrop /></QuickIcon>
        </QuickAccess>
        <TopSearch><Magnifier />Search</TopSearch>
        <WindowControls>
          <WindowSlot><Avatar>AW</Avatar></WindowSlot>
          <WindowSlot><Bell /></WindowSlot>
          <WindowSlot><Svg w={18} h={3} sw={3}><path d="M0 1.5h18" /></Svg></WindowSlot>
          <WindowSlot><Restore /></WindowSlot>
          <WindowSlot><Close /></WindowSlot>
        </WindowControls>
      </TitleBar>
      <Body>
        <Rail>
          <RailButton><MailIcon /></RailButton>
          <RailButton $active><RailCalendar /></RailButton>
          <RailButton><PeopleIcon /></RailButton>
          <RailButton><TasksIcon /></RailButton>
          <RailButton><TodoLogo /></RailButton>
          <RailButton><AppsIcon /></RailButton>
        </Rail>
        <Workspace>
          <TabRow>
            <Tab $mr={51}>File</Tab>
            <Tab $mr={38} $active>Home</Tab>
            <Tab $mr={40}>Send / Receive</Tab>
            <Tab $mr={38}>View</Tab>
            <Tab $mr={0}>Help</Tab>
            <NewOutlook>
              Try the new Outlook
              <Toggle>Off</Toggle>
            </NewOutlook>
          </TabRow>
          <RibbonBar />
          <Panel>
            <LeftSide />
            <CalendarSide />
          </Panel>
        </Workspace>
      </Body>
      <StatusBar>
        Items: 55
        <StatusRight>
          <StatusText $mr={36}>All folders are up to date.</StatusText>
          <StatusText $mr={35}>Connected to: Microsoft Exchange</StatusText>
          <ViewTab $on $mr={0}><ViewNormal /></ViewTab>
          <ViewTab $mr={16}><ViewReading /></ViewTab>
          <Slider>
            <span>−</span>
            <SliderTrack />
            <span>+</span>
          </Slider>
          <ZoomPct>10%</ZoomPct>
        </StatusRight>
      </StatusBar>
      <Taskbar>
        <Weather>
          <CloudWeather />
          <div>
            29°F
            <WeatherSub>Cloudy</WeatherSub>
          </div>
        </Weather>
        <WindowsLogo />
        <SearchPill>
          <TaskSearch />
          Search
          <PillArt><PillPicture /></PillArt>
        </SearchPill>
        <TaskView />
        <TaskTiles>
          <TaskTile $active $mark="blue"><OutlookLogo size={48} /></TaskTile>
          <TaskTile $mark="gray"><ChromeLogo /></TaskTile>
          <TaskTile><CopilotLogo /></TaskTile>
          <TaskTile><StoreLogo /></TaskTile>
          <TaskTile><SpotifyLogo /></TaskTile>
          <TaskTile><FolderLogo /></TaskTile>
          <TaskTile><ShieldLogo /></TaskTile>
          <TaskTile><LBadge /></TaskTile>
          <TaskTile><CreeperLogo /></TaskTile>
        </TaskTiles>
        <Tray>
          <ChevronUp />
          <TrayIcon $ml={34}><TrayCloud /></TrayIcon>
          <TrayIcon $ml={32}><WifiIcon /></TrayIcon>
          <TrayIcon $ml={17}><SpeakerIcon /></TrayIcon>
          <TrayIcon $ml={15}><BatteryIcon /></TrayIcon>
          <Clock>
            <div>7:38 PM</div>
            <div>1/16/2025</div>
          </Clock>
        </Tray>
      </Taskbar>
    </Shell>
  );
}
